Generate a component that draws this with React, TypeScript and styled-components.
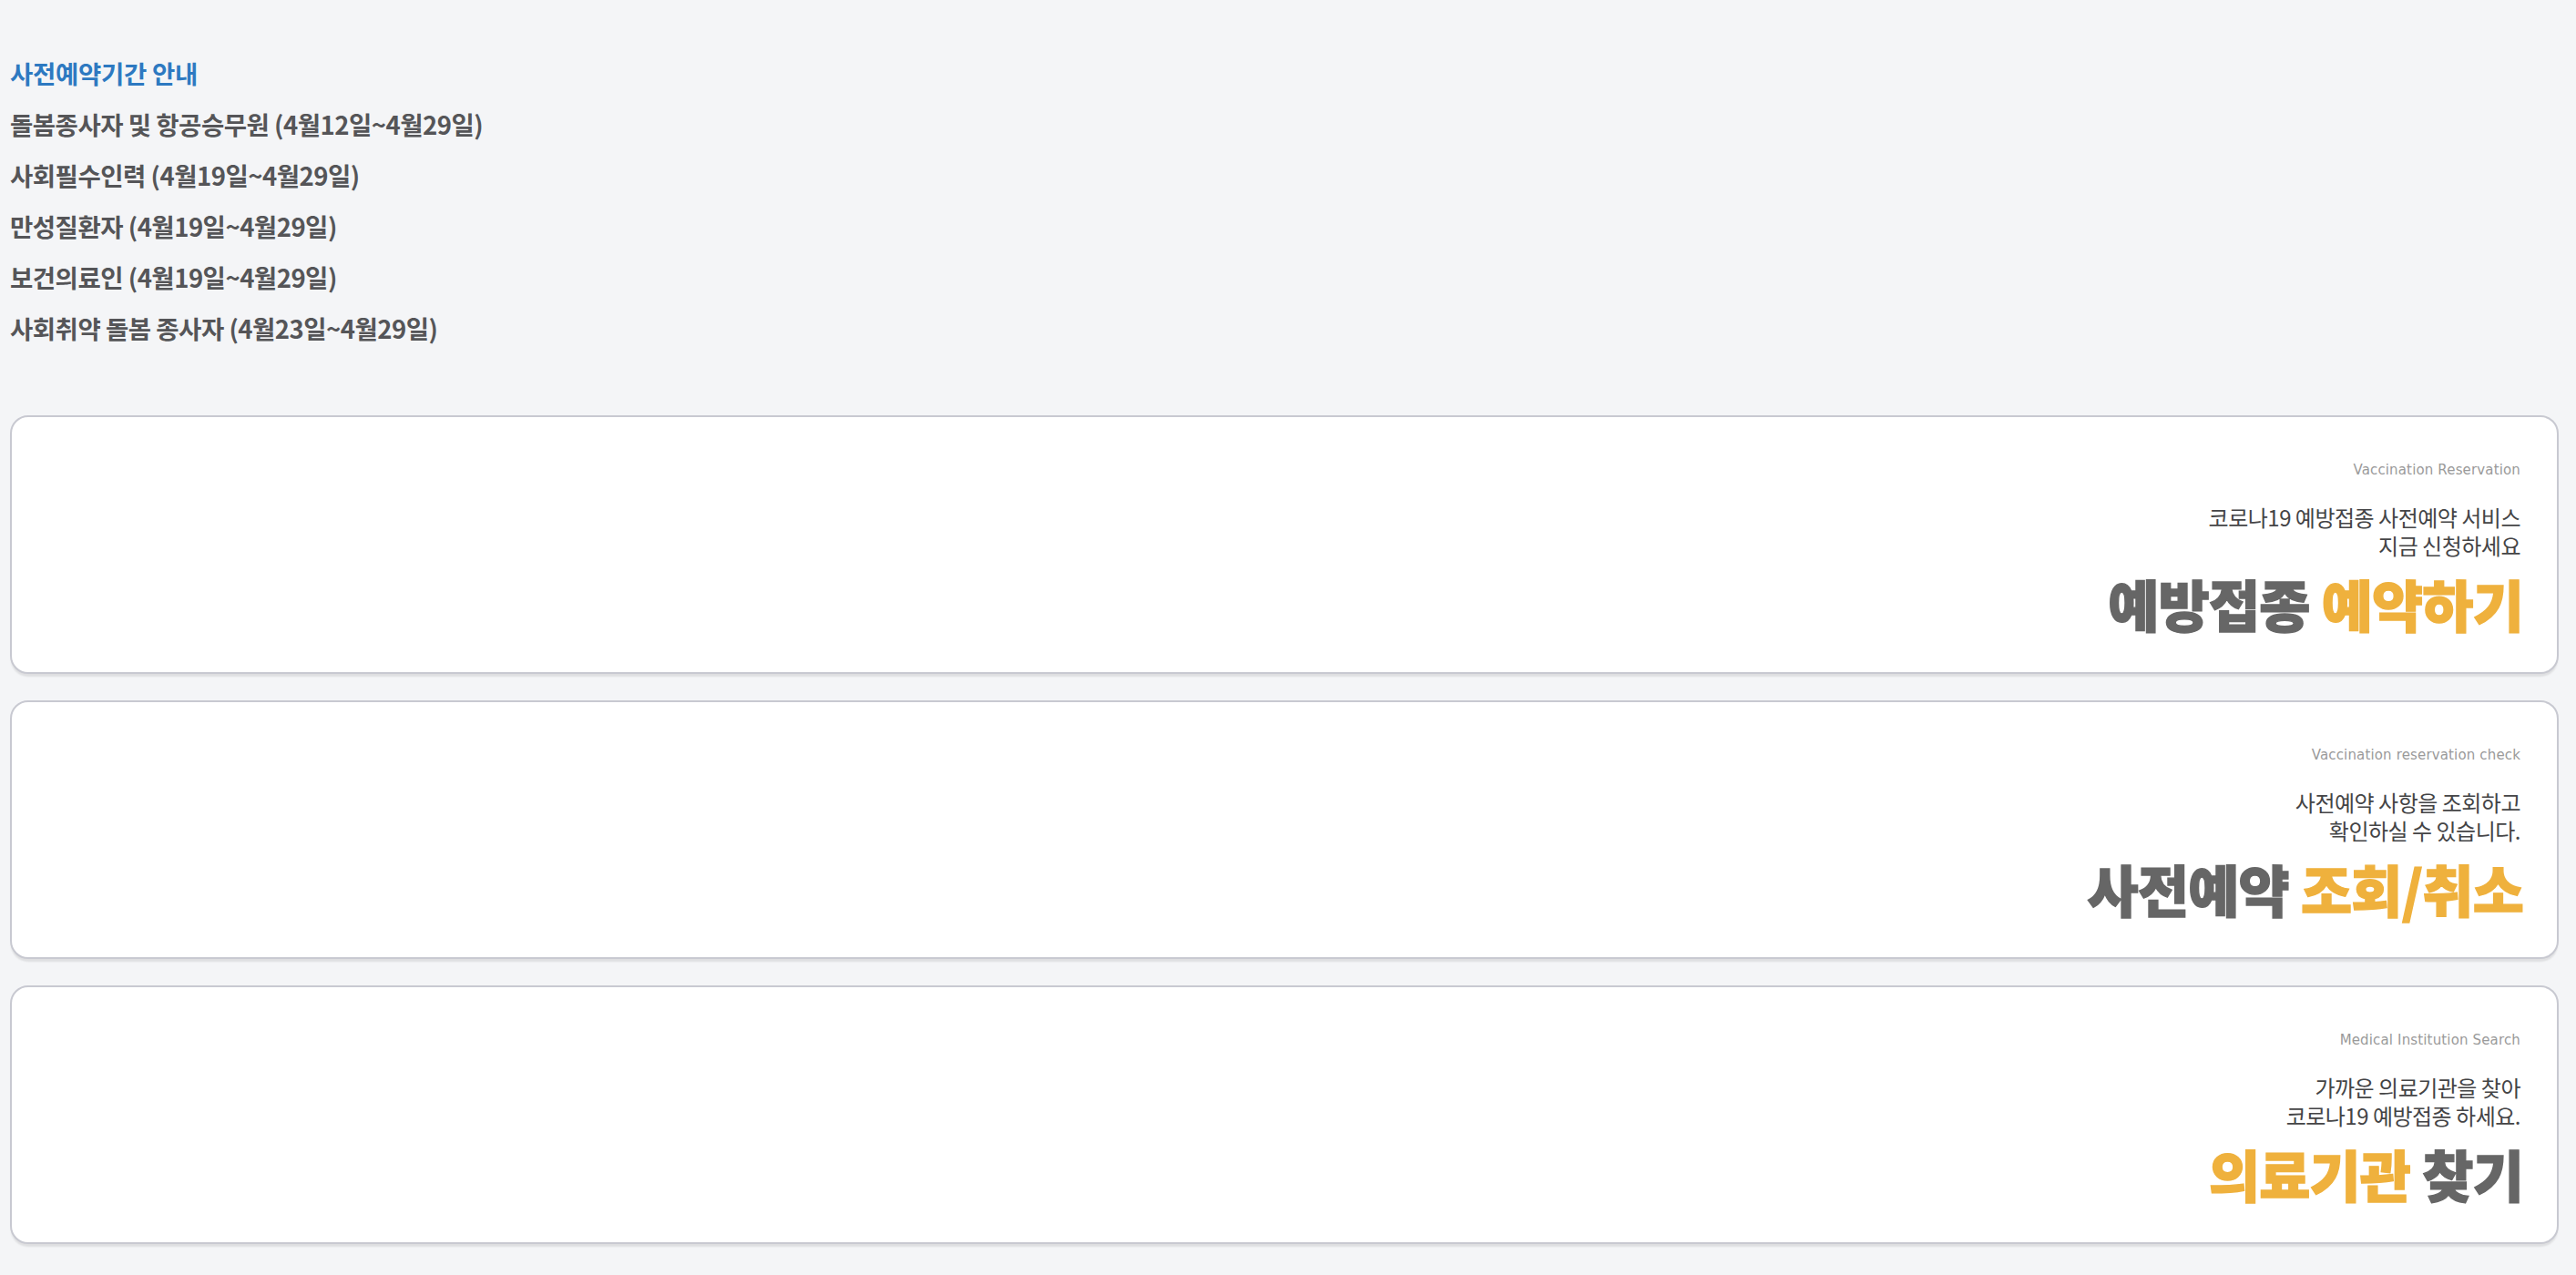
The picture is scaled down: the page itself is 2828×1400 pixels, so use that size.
import React from "react";
import styled, { createGlobalStyle } from "styled-components";

const GlobalStyle = createGlobalStyle`
  html, body {
    margin: 0;
    padding: 0;
    background: #f4f5f7;
  }
  body {
    font-family: "Noto Sans CJK KR", "Noto Sans", sans-serif;
  }
`;

const Page = styled.div`
  padding: 52px 19px 40px 11px;
`;

const Notice = styled.section`
  display: flex;
  flex-direction: column;
  margin-bottom: 68px;
`;

const NoticeLine = styled.div<{ $accent?: boolean }>`
  font-family: "Noto Sans CJK KR", sans-serif;
  font-weight: 700;
  font-size: 27.5px;
  line-height: 56px;
  height: 56px;
  letter-spacing: ${(p) => (p.$accent ? "-0.3px" : "-0.5px")};
  color: ${(p) => (p.$accent ? "#2d79c1" : "#555558")};
  white-space: nowrap;
`;

const CardList = styled.div`
  display: flex;
  flex-direction: column;
  gap: 29px;
`;

const Card = styled.a`
  display: flex;
  flex-direction: column;
  align-items: flex-end;
  box-sizing: border-box;
  height: 284px;
  padding: 48px 40px 0 0;
  background: #ffffff;
  border: 2px solid #c8c9d1;
  border-radius: 20px;
  box-shadow: 0 4px 2px -1px rgba(0, 0, 0, 0.09);
  text-decoration: none;
  cursor: pointer;
`;

const EngLabel = styled.div`
  font-family: "DejaVu Sans", "Noto Sans", sans-serif;
  font-size: 15px;
  line-height: 20px;
  color: #9a9a9a;
  letter-spacing: 0.15px;
`;

const Desc = styled.div`
  margin-top: 26px;
  font-family: "Noto Sans CJK KR", sans-serif;
  font-weight: 400;
  font-size: 24px;
  line-height: 31px;
  letter-spacing: -0.5px;
  color: #444446;
  text-align: right;
`;

const Title = styled.div`
  margin-top: 14px;
  margin-right: -3px;
  font-family: "Noto Sans CJK KR", sans-serif;
  font-weight: 900;
  font-size: 61px;
  line-height: 70px;
  letter-spacing: -0.8px;
  -webkit-text-stroke: 1.4px currentColor;
  white-space: nowrap;
`;

const Tone = styled.span<{ $orange?: boolean }>`
  color: ${(p) => (p.$orange ? "#efb13d" : "#666666")};
`;

const notices = [
  "돌봄종사자 및 항공승무원 (4월12일~4월29일)",
  "사회필수인력 (4월19일~4월29일)",
  "만성질환자 (4월19일~4월29일)",
  "보건의료인 (4월19일~4월29일)",
  "사회취약 돌봄 종사자 (4월23일~4월29일)",
];

type Part = { text: string; orange?: boolean };
type CardData = { eng: string; desc: string[]; title: Part[] };

const cards: CardData[] = [
  {
    eng: "Vaccination Reservation",
    desc: ["코로나19 예방접종 사전예약 서비스", "지금 신청하세요"],
    title: [{ text: "예방접종 " }, { text: "예약하기", orange: true }],
  },
  {
    eng: "Vaccination reservation check",
    desc: ["사전예약 사항을 조회하고", "확인하실 수 있습니다."],
    title: [{ text: "사전예약 " }, { text: "조회/취소", orange: true }],
  },
  {
    eng: "Medical Institution Search",
    desc: ["가까운 의료기관을 찾아", "코로나19 예방접종 하세요."],
    title: [{ text: "의료기관", orange: true }, { text: " 찾기" }],
  },
];

export default function App() {
  return (
    <>
      <GlobalStyle />
      <Page>
        <Notice>
          <NoticeLine $accent>사전예약기간 안내</NoticeLine>
          {notices.map((n) => (
            <NoticeLine key={n}>{n}</NoticeLine>
          ))}
        </Notice>
        <CardList>
          {cards.map((c) => (
            <Card key={c.eng}>
              <EngLabel>{c.eng}</EngLabel>
              <Desc>
                {c.desc.map((d) => (
                  <div key={d}>{d}</div>
                ))}
              </Desc>
              <Title>
                {c.title.map((p) => (
                  <Tone key={p.text} $orange={p.orange}>
                    {p.text}
                  </Tone>
                ))}
              </Title>
            </Card>
          ))}
        </CardList>
      </Page>
    </>
  );
}
